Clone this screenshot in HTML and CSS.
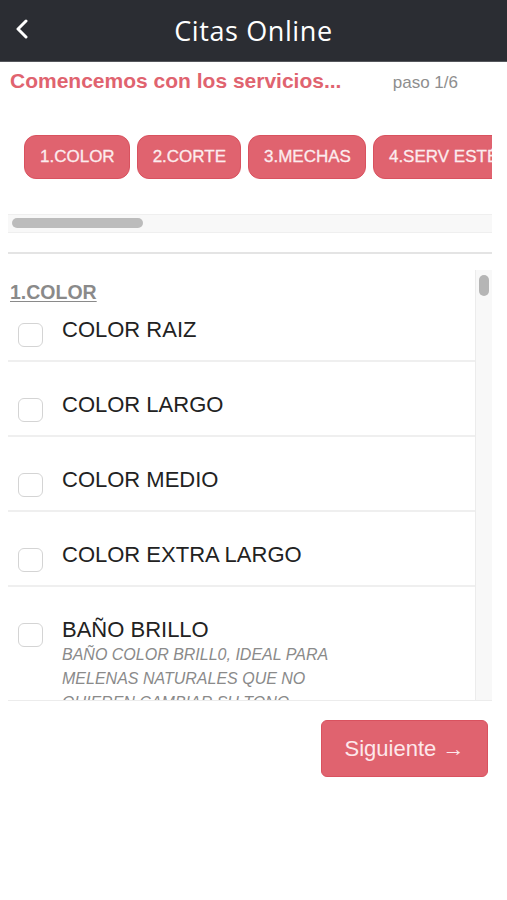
FILE: index.html
```html
<!DOCTYPE html>
<html lang="es">
<head>
<meta charset="utf-8">
<title>Citas Online</title>
<link rel="stylesheet" href="styles.css">
</head>
<body>
<header class="topbar">
  <span class="back" aria-label="Volver">
    <svg width="14" height="20" viewBox="0 0 14 20"><path d="M11 2 L3 10 L11 18" fill="none" stroke="#fff" stroke-width="3" stroke-linecap="round" stroke-linejoin="round"/></svg>
  </span>
  <h1 class="title">Citas Online</h1>
</header>
<main class="page">
  <div class="intro">
    <h2 class="lead">Comencemos con los servicios...</h2>
    <span class="step">paso 1/6</span>
  </div>
  <div class="tabs-wrap">
    <nav class="tabs">
      <button class="tab">1.COLOR</button>
      <button class="tab">2.CORTE</button>
      <button class="tab">3.MECHAS</button>
      <button class="tab">4.SERV ESTÉTICA</button>
      <button class="tab">5.PEINADOS</button>
    </nav>
    <div class="hscroll"><div class="hthumb"></div></div>
  </div>
  <hr class="divider">
  <section class="listbox">
    <div class="list">
      <h3 class="cat">1.COLOR</h3>
      <label class="row first"><span class="check"></span><span class="text"><span class="name">COLOR RAIZ</span></span></label>
      <label class="row"><span class="check"></span><span class="text"><span class="name">COLOR LARGO</span></span></label>
      <label class="row"><span class="check"></span><span class="text"><span class="name">COLOR MEDIO</span></span></label>
      <label class="row"><span class="check"></span><span class="text"><span class="name">COLOR EXTRA LARGO</span></span></label>
      <label class="row"><span class="check"></span><span class="text"><span class="name">BAÑO BRILLO</span><span class="desc">BAÑO COLOR BRILL0, IDEAL PARA MELENAS NATURALES QUE NO QUIEREN CAMBIAR SU TONO</span></span></label>
    </div>
    <div class="vscroll"><div class="vthumb"></div></div>
  </section>
  <div class="actions">
    <button class="next">Siguiente →</button>
  </div>
</main>
</body>
</html>
```
FILE: styles.css
```css
* { box-sizing: border-box; }
html, body { margin: 0; padding: 0; background: #fff; }
body { font-family: "Liberation Sans", Arial, sans-serif; color: #222; width: 507px; }

.topbar {
  height: 62px;
  background: #2b2d33;
  display: flex;
  align-items: center;
  justify-content: center;
  position: relative;
  border-bottom: 1px solid #55575c;
}
.back { position: absolute; left: 15px; top: 19px; }
.title {
  margin: 0;
  font-family: "Open Sans", sans-serif;
  font-weight: 400;
  font-size: 27px;
  color: #fff;
  letter-spacing: 0.6px;
}

.page { padding: 0 15px 0 8px; }

.intro {
  display: flex;
  align-items: baseline;
  justify-content: space-between;
  padding: 7px 34px 0 2px;
  height: 46px;
}
.lead {
  margin: 0;
  font-size: 21px;
  font-weight: 700;
  color: #e0636f;
}
.step { font-size: 17px; color: #8e8e8e; }

.tabs-wrap { padding-top: 27px; }
.tabs {
  display: flex;
  gap: 7px;
  padding-left: 16px;
  overflow: hidden;
  white-space: nowrap;
}
.tab {
  flex: none;
  height: 44px;
  padding: 0 14px 0 15px;
  border: 1px solid #d9525f;
  border-radius: 12px;
  background: #e0636f;
  color: #fcecee;
  font-family: "Liberation Sans", Arial, sans-serif;
  font-size: 17px;
  -webkit-text-stroke: 0.3px #fcecee;
}
.hscroll {
  margin-top: 35px;
  height: 19px;
  background: #f8f8f8;
  border-top: 1px solid #efefef;
  border-bottom: 1px solid #efefef;
  padding: 3px 0 0 4px;
}
.hthumb { width: 131px; height: 10px; border-radius: 5px; background: #bcbcbc; }

.divider { margin: 19px 0 0; border: 0; border-top: 2px solid #e4e4e4; }

.listbox {
  margin-top: 16px;
  height: 431px;
  display: flex;
  border-bottom: 1px solid #ececec;
}
.list { flex: 1; overflow: hidden; }
.vscroll {
  width: 17px;
  background: #f8f8f8;
  border-left: 1px solid #ececec;
  padding: 5px 0 0 3px;
}
.vthumb { width: 10px; height: 21px; border-radius: 5px; background: #b5b5b5; }

.cat {
  margin: 11px 0 0 2px;
  font-size: 19.5px;
  line-height: 22px;
  font-weight: 700;
  color: #8a8a8a;
  text-decoration: underline;
  text-underline-offset: 2px;
}
.row {
  display: flex;
  align-items: flex-start;
  gap: 19px;
  padding: 30px 0 13px 10px;
  border-bottom: 2px solid #efefef;
}
.row.first { padding-top: 14px; }
.check {
  flex: none;
  width: 25px;
  height: 24px;
  margin-top: 6px;
  border: 1.5px solid #d4d4d4;
  border-radius: 6px;
  background: #fff;
}
.text { display: flex; flex-direction: column; }
.name { font-size: 22px; line-height: 26px; color: #222; }
.desc {
  font-size: 16px;
  line-height: 24px;
  font-style: italic;
  color: #8a8a8a;
  width: 300px;
}

.actions { display: flex; justify-content: flex-end; padding: 19px 4px 0 0; }
.next {
  width: 167px;
  height: 57px;
  border: 1px solid #d9525f;
  border-radius: 6px;
  background: #e0636f;
  color: #fde8eb;
  font-family: "Liberation Sans", Arial, sans-serif;
  font-size: 22px;
}
```
